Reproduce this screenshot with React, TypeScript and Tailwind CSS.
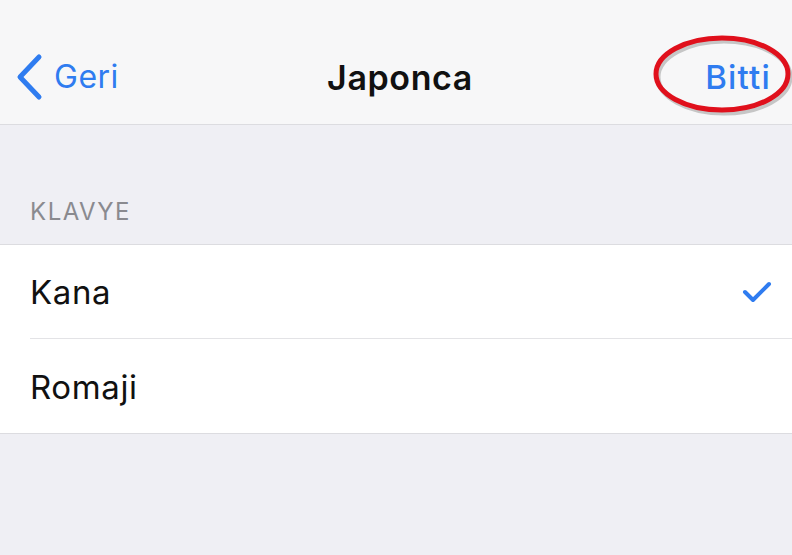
import React from "react";

const rows = [
  { name: "Kana", selected: true },
  { name: "Romaji", selected: false },
];

const App = () => {
  return (
    <div
      className="relative w-[792px] h-[555px] overflow-hidden bg-[#efeff4]"
      style={{ fontFamily: "Inter, 'Liberation Sans', sans-serif" }}
    >
      {/* nav bar */}
      <div className="relative flex h-[125px] items-center justify-between border-b border-[#dcdce0] bg-[#f7f7f8] pt-[30px]">
        <button className="flex items-center gap-[10px] pl-[14px] text-[#2f7cf0]">
          <svg width="30" height="48" viewBox="0 0 30 48" fill="none">
            <path
              d="M25 4 L6 24 L25 44"
              stroke="#2f7cf0"
              strokeWidth="5"
              strokeLinecap="round"
              strokeLinejoin="round"
            />
          </svg>
          <span className="text-[32px] leading-none tracking-[0.5px]">Geri</span>
        </button>
        <h1 className="absolute left-0 right-0 top-[30px] flex h-[95px] items-center justify-center pl-[8px] text-[34px] font-semibold tracking-[0.6px] text-[#111]">
          Japonca
        </h1>
        <button className="pr-[21px] text-[33px] font-medium leading-none tracking-[1.2px] text-[#2f7cf0]">
          Bitti
        </button>
      </div>

      {/* section header */}
      <div className="flex h-[119px] items-end pb-[14px] pl-[30px] text-[24px] tracking-[1.5px] text-[#8a8a8f]">
        KLAVYE
      </div>

      {/* list */}
      <div className="border-y border-[#dcdce0] bg-white">
        {rows.map((row, index) => (
          <div key={row.name} className="pl-[30px]">
            <div
              className={
                "flex h-[94px] items-center justify-between pr-[20px] " +
                (index < rows.length - 1 ? "border-b border-[#e3e3e6]" : "")
              }
            >
              <span className="pt-[3px] text-[33px] tracking-[0.6px] text-[#111]">{row.name}</span>
              {row.selected ? (
                <svg width="30" height="22" viewBox="0 0 30 22" fill="none">
                  <path
                    d="M3 11 L11 19 L27 3"
                    stroke="#2f7cf0"
                    strokeWidth="4"
                    strokeLinecap="round"
                    strokeLinejoin="round"
                  />
                </svg>
              ) : null}
            </div>
          </div>
        ))}
      </div>

      {/* red marker circle around Bitti */}
      <svg
        className="pointer-events-none absolute left-[650px] top-[32px]"
        width="142"
        height="88"
        viewBox="0 0 142 88"
        fill="none"
      >
        <ellipse cx="74" cy="45" rx="66" ry="36" stroke="#8a8a8a" strokeOpacity="0.45" strokeWidth="5" />
        <ellipse cx="72" cy="42" rx="66" ry="36" stroke="#e0101c" strokeWidth="5" />
      </svg>
    </div>
  );
};

export default App;
